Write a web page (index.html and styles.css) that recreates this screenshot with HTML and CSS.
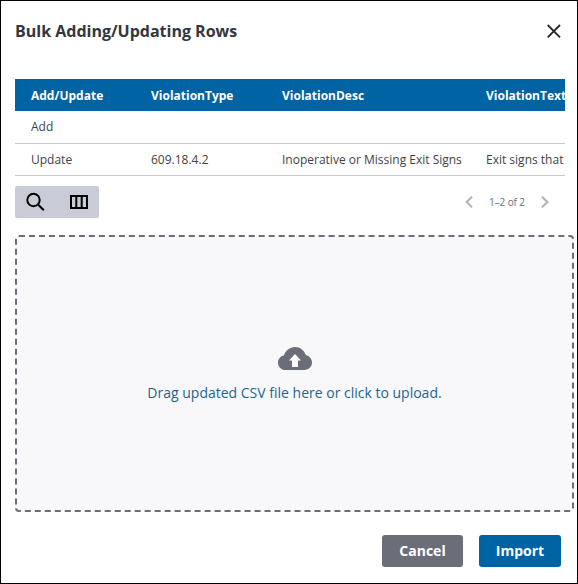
FILE: index.html
```html
<!DOCTYPE html>
<html lang="en">
<head>
<meta charset="utf-8">
<title>Bulk Adding/Updating Rows</title>
<link rel="stylesheet" href="styles.css">
</head>
<body>
<div class="dialog">
  <header class="head">
    <h1 class="title">Bulk Adding/Updating Rows</h1>
    <button class="close" aria-label="Close">
      <svg width="14" height="14" viewBox="0 0 14 14"><path d="M0.7 1L13 13.3M13 1L0.7 13.3" stroke="#23272b" stroke-width="1.8" fill="none"/></svg>
    </button>
  </header>
  <div class="table-wrap">
    <table class="grid">
      <colgroup><col class="c1"><col class="c2"><col class="c3"><col class="c4"></colgroup>
      <thead>
        <tr><th>Add/Update</th><th>ViolationType</th><th>ViolationDesc</th><th>ViolationText</th></tr>
      </thead>
      <tbody>
        <tr><td>Add</td><td></td><td></td><td></td></tr>
        <tr><td>Update</td><td>609.18.4.2</td><td>Inoperative or Missing Exit Signs</td><td>Exit signs that</td></tr>
      </tbody>
    </table>
  </div>
  <div class="toolbar">
    <div class="tools">
      <button class="tool" aria-label="Search">
        <svg width="20" height="20" viewBox="0 0 20 20"><circle cx="7.5" cy="8" r="6.2" stroke="#000" stroke-width="2" fill="none"/><path d="M12 12.5L17.8 18.3" stroke="#000" stroke-width="2" fill="none"/></svg>
      </button>
      <button class="tool tool-cols" aria-label="Columns">
        <svg width="18" height="14" viewBox="0 0 18 14"><path d="M1 1H17V13H1ZM6.3 1V13M11.7 1V13" stroke="#000" stroke-width="2" fill="none"/></svg>
      </button>
    </div>
    <div class="pager">
      <svg width="8" height="12" viewBox="0 0 8 12"><path d="M7 0.8L1.6 6L7 11.2" stroke="#b0b2b8" stroke-width="2" fill="none"/></svg>
      <span class="range">1–2 of 2</span>
      <svg width="8" height="12" viewBox="0 0 8 12"><path d="M1 0.8L6.4 6L1 11.2" stroke="#b0b2b8" stroke-width="2" fill="none"/></svg>
    </div>
  </div>
  <div class="drop">
    <svg width="34" height="23" viewBox="0 0 34 23"><path fill="#6b6e78" d="M7.5 23C3.4 23 0 19.8 0 15.7C0 12.2 2.5 9.2 5.9 8.6C7.3 3.6 11.7 0 17 0C22 0 26.3 3.4 27.8 8C31.3 8.8 34 12 34 15.6C34 19.8 30.6 23 26.5 23Z"/><path fill="#fff" d="M17 7L23 13.5H20V20H14V13.5H11Z"/></svg>
    <p class="drop-text">Drag updated CSV file here or click to upload.</p>
  </div>
  <footer class="foot">
    <button class="btn cancel">Cancel</button>
    <button class="btn import">Import</button>
  </footer>
</div>
</body>
</html>
```
FILE: styles.css
```css
* { box-sizing: border-box; }
html, body { margin: 0; padding: 0; background: #fff; }
body { font-family: "Open Sans", "Noto Sans", sans-serif; }
.dialog {
  width: 578px;
  height: 584px;
  border: 1px solid #000;
  background: #fff;
  display: flex;
  flex-direction: column;
  padding: 0 3px 0 14px;
  overflow: hidden;
}
.head {
  height: 78px;
  display: flex;
  justify-content: space-between;
  padding: 17px 13px 0 0;
  align-items: flex-start;
}
.title { margin: 0; font-size: 16px; line-height: 26px; font-weight: 700; color: #33373d; }
.close { border: 0; background: none; padding: 0; margin-top: 6px; height: 14px; line-height: 0; }
.table-wrap { width: 550px; overflow: hidden; }
.grid { border-collapse: collapse; table-layout: fixed; width: 611px; font-size: 12px; }
.c1 { width: 121px; } .c2 { width: 131px; } .c3 { width: 204px; } .c4 { width: 155px; }
.grid th {
  height: 32px;
  background: #0063a3;
  color: #fff;
  font-weight: 700;
  text-align: left;
  padding: 0 0 0 16px;
  white-space: nowrap;
}
.grid th + th, .grid td + td { padding-left: 15px; }
.grid td {
  height: 32px;
  color: #3f4247;
  padding: 0 0 0 16px;
  border-bottom: 1px solid #c8c9cc;
  white-space: nowrap;
  overflow: hidden;
}
.toolbar {
  display: flex;
  justify-content: space-between;
  align-items: center;
  width: 550px;
  margin-top: 10px;
  height: 32px;
}
.tools { display: flex; width: 84px; height: 32px; background: #c9ccd6; border-radius: 2px; }
.tool { flex: 1; border: 0; background: none; padding: 0; display: flex; align-items: center; justify-content: center; }
.tool-cols { padding-left: 2px; }
.pager { display: flex; align-items: center; gap: 16px; padding-right: 16px; }
.range { font-size: 10px; color: #6b6e78; letter-spacing: -0.1px; }
.drop {
  margin-top: 17px;
  width: 559px;
  height: 277px;
  border: 2px dashed #6b6e78;
  border-radius: 4px;
  background: #f8f8fb;
  display: flex;
  flex-direction: column;
  align-items: center;
  padding-top: 110px;
}
.drop-text { margin: 13px 0 0; font-size: 14px; line-height: 20px; color: #1f6490; }
.foot {
  display: flex;
  justify-content: flex-end;
  gap: 16px;
  width: 546px;
  margin-top: 23px;
}
.btn {
  height: 32px;
  border: 0;
  border-radius: 3px;
  color: #fff;
  font: 700 14px "Open Sans", "Noto Sans", sans-serif;
  padding: 0;
}
.cancel { width: 81px; background: #6b6e78; }
.import { width: 82px; background: #0063a3; }
```
